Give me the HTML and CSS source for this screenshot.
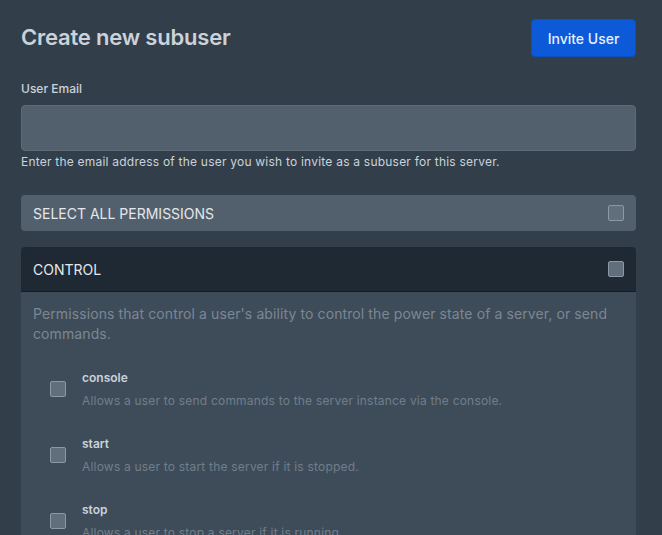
FILE: index.html
```html
<!DOCTYPE html>
<html>
<head>
  <meta charset="UTF-8">
  <title>Create new subuser</title>
  <link rel="stylesheet" href="styles.css">
</head>
<body>
  <div class="container">
    <div class="header">
      <h2 class="title">Create new subuser</h2>
      <button class="invite-btn">Invite User</button>
    </div>

    <div class="field">
      <label class="field-label" for="email">User Email</label>
      <input id="email" class="field-input" type="email">
      <p class="field-help">Enter the email address of the user you wish to invite as a subuser for this server.</p>
    </div>

    <div class="select-all">
      <span>SELECT ALL PERMISSIONS</span>
      <span class="checkbox"></span>
    </div>

    <!-- permission group -->
    <div class="perm-card">
      <div class="perm-card-header">
        <span>CONTROL</span>
        <span class="checkbox"></span>
      </div>
      <div class="perm-card-body">
        <p class="perm-card-desc">Permissions that control a user's ability to control the power state of a server, or send commands.</p>

        <div class="perm-row">
          <span class="checkbox"></span>
          <div class="perm-text">
            <div class="perm-name">console</div>
            <div class="perm-info">Allows a user to send commands to the server instance via the console.</div>
          </div>
        </div>
        <div class="perm-row">
          <span class="checkbox"></span>
          <div class="perm-text">
            <div class="perm-name">start</div>
            <div class="perm-info">Allows a user to start the server if it is stopped.</div>
          </div>
        </div>
        <div class="perm-row">
          <span class="checkbox"></span>
          <div class="perm-text">
            <div class="perm-name">stop</div>
            <div class="perm-info">Allows a user to stop a server if it is running.</div>
          </div>
        </div>
      </div>
    </div>
  </div>
</body>
</html>
```

FILE: styles.css
```css
html, body {
  height: 100%;
}

body {
  margin: 0;
  background-color: #323f4b;
  font-family: Inter, 'Noto Sans', sans-serif;
  overflow: hidden;
}

.container {
  padding: 19px 26px 0 21px;
}

.header {
  display: flex;
  justify-content: space-between;
  align-items: center;
}

.title {
  margin: -3px 0 0;
  font-size: 22px;
  font-weight: 600;
  color: #cbd2d9;
  letter-spacing: -0.2px;
}

.invite-btn {
  height: 38px;
  width: 105px;
  padding: 0;
  border: 1px solid #0a4fc4;
  border-radius: 4px;
  background-color: #0d5ad9;
  color: #e6f0ff;
  font-family: inherit;
  font-size: 14px;
  font-weight: 500;
}

.field {
  margin-top: 24px;
}

.field-label {
  display: block;
  font-size: 12px;
  font-weight: 500;
  color: #cbd2d9;
  margin-bottom: 9px;
}

.field-input {
  display: block;
  box-sizing: border-box;
  width: 100%;
  height: 46px;
  margin: 0;
  background-color: #52606d;
  border: 1px solid #5d6b78;
  border-radius: 4px;
}

.field-help {
  margin: 3px 0 0;
  font-size: 12px;
  color: #cbd2d9;
  letter-spacing: 0.22px;
}

.checkbox {
  display: inline-block;
  box-sizing: border-box;
  width: 16px;
  height: 16px;
  border: 1px solid #8d98a4;
  border-radius: 2px;
  background-color: #616e7c;
  flex-shrink: 0;
}

.select-all {
  display: flex;
  justify-content: space-between;
  align-items: center;
  height: 36px;
  margin-top: 26px;
  padding: 0 12px;
  background-color: #52606d;
  border-radius: 4px;
  font-size: 14px;
  color: #e4e7eb;
}

.perm-card {
  margin-top: 16px;
  border-radius: 4px;
  overflow: hidden;
}

.perm-card-header {
  display: flex;
  justify-content: space-between;
  align-items: center;
  height: 44px;
  padding: 0 12px;
  background-color: #1f2933;
  border-bottom: 1px solid #151c24;
  font-size: 14px;
  color: #e4e7eb;
}

.perm-card-body {
  background-color: #3e4c59;
  padding: 12px 12px 20px;
  height: 400px;
}

.perm-card-desc {
  margin: 0 0 26px;
  font-size: 14px;
  line-height: 20px;
  color: #7b8794;
  letter-spacing: 0.1px;
}

.perm-row {
  display: flex;
  align-items: center;
  padding-left: 17px;
  margin-bottom: 28px;
}

.perm-row .checkbox {
  margin-right: 16px;
}

.perm-name {
  font-size: 12px;
  font-weight: 600;
  color: #cbd2d9;
  margin-bottom: 8px;
}

.perm-info {
  font-size: 12px;
  color: #717e8b;
  letter-spacing: 0.2px;
}
```
